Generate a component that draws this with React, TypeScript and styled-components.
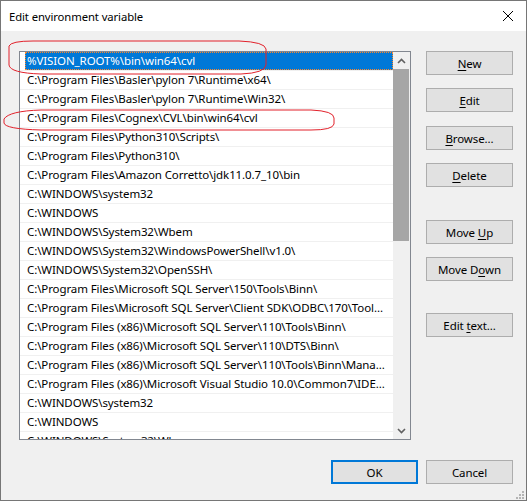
import React from "react";
import styled, { createGlobalStyle } from "styled-components";

const GlobalStyle = createGlobalStyle`
  html, body { margin: 0; padding: 0; background: #f0f0f0; }
  body { font-family: "Noto Sans", "Open Sans", "DejaVu Sans", sans-serif; font-size: 11.5px; letter-spacing: -0.1px; color: #000; }
  * { box-sizing: border-box; }
`;

const Window = styled.div`
  position: relative;
  width: 527px;
  height: 501px;
  border: 1px solid #767676;
  background: #f0f0f0;
  display: flex;
  flex-direction: column;
`;

const TitleBar = styled.div`
  height: 30px;
  background: #fff;
  display: flex;
  align-items: center;
  justify-content: space-between;
  padding: 0 13px 0 8px;
`;

const Title = styled.span`
  font-size: 11.3px;
  letter-spacing: -0.1px;
  color: #000;
`;

const Body = styled.div`
  flex: 1;
  display: flex;
  flex-direction: column;
  padding: 20px 13px 0 18px;
`;

const TopRow = styled.div`
  display: flex;
  gap: 15px;
`;

const ListBox = styled.div`
  width: 392px;
  height: 389px;
  border: 1px solid #828790;
  background: #fff;
  display: flex;
  overflow: hidden;
`;

const Rows = styled.div`
  flex: 1;
  display: flex;
  flex-direction: column;
  overflow: hidden;
`;

const Row = styled.div`
  height: 19px;
  flex: none;
  display: flex;
  padding-left: 5px;
  border-bottom: 1px solid #f0f0f0;
`;

const RowLabel = styled.div<{ $selected?: boolean }>`
  flex: 1;
  height: 18px;
  line-height: 18px;
  padding-left: 2px;
  white-space: nowrap;
  overflow: hidden;
  background: ${(p) => (p.$selected ? "#0078d7" : "transparent")};
  color: ${(p) => (p.$selected ? "#fff" : "#000")};
  outline: ${(p) => (p.$selected ? "1px dotted #ff8728" : "none")};
  outline-offset: -1px;
`;

const ScrollBar = styled.div`
  width: 17px;
  flex: none;
  background: #f0f0f0;
  display: flex;
  flex-direction: column;
`;

const ArrowBox = styled.div`
  height: 17px;
  flex: none;
  display: flex;
  align-items: center;
  justify-content: center;
`;

const Thumb = styled.div`
  height: 172px;
  margin-right: 1px;
  background: #a6a6a6;
`;

const Track = styled.div`
  flex: 1;
`;

const ButtonColumn = styled.div`
  display: flex;
  flex-direction: column;
  width: 87px;
`;

const Button = styled.button<{ $space?: number; $default?: boolean }>`
  width: 87px;
  height: 24px;
  margin: ${(p) => p.$space ?? 0}px 0 0 0;
  padding: 0;
  background: #e1e1e1;
  border: ${(p) => (p.$default ? "2px solid #0078d7" : "1px solid #adadad")};
  font-family: inherit;
  font-size: 11.5px;
  letter-spacing: -0.1px;
  color: #000;
  display: flex;
  align-items: center;
  justify-content: center;
  u { text-decoration-thickness: 1px; text-underline-offset: 2px; }
`;

const BottomRow = styled.div`
  display: flex;
  justify-content: flex-end;
  gap: 8px;
  margin-top: 20px;
`;

const Annotations = styled.svg`
  position: absolute;
  left: 0;
  top: 0;
  width: 527px;
  height: 501px;
  pointer-events: none;
`;

const Grip = styled.svg`
  position: absolute;
  right: 2px;
  bottom: 1px;
`;

const paths = [
  "%VISION_ROOT%\\bin\\win64\\cvl",
  "C:\\Program Files\\Basler\\pylon 7\\Runtime\\x64\\",
  "C:\\Program Files\\Basler\\pylon 7\\Runtime\\Win32\\",
  "C:\\Program Files\\Cognex\\CVL\\bin\\win64\\cvl",
  "C:\\Program Files\\Python310\\Scripts\\",
  "C:\\Program Files\\Python310\\",
  "C:\\Program Files\\Amazon Corretto\\jdk11.0.7_10\\bin",
  "C:\\WINDOWS\\system32",
  "C:\\WINDOWS",
  "C:\\WINDOWS\\System32\\Wbem",
  "C:\\WINDOWS\\System32\\WindowsPowerShell\\v1.0\\",
  "C:\\WINDOWS\\System32\\OpenSSH\\",
  "C:\\Program Files\\Microsoft SQL Server\\150\\Tools\\Binn\\",
  "C:\\Program Files\\Microsoft SQL Server\\Client SDK\\ODBC\\170\\Tool...",
  "C:\\Program Files (x86)\\Microsoft SQL Server\\110\\Tools\\Binn\\",
  "C:\\Program Files (x86)\\Microsoft SQL Server\\110\\DTS\\Binn\\",
  "C:\\Program Files (x86)\\Microsoft SQL Server\\110\\Tools\\Binn\\Mana...",
  "C:\\Program Files (x86)\\Microsoft Visual Studio 10.0\\Common7\\IDE...",
  "C:\\WINDOWS\\system32",
  "C:\\WINDOWS",
  "C:\\WINDOWS\\System32\\Wbem",
];

const Chevron = ({ up }: { up?: boolean }) => (
  <svg width="9" height="6" viewBox="0 0 9 6">
    <path
      d={up ? "M1 5 L4.5 1.5 L8 5" : "M1 1 L4.5 4.5 L8 1"}
      fill="none"
      stroke="#606060"
      strokeWidth="1.6"
    />
  </svg>
);

export default function App() {
  return (
    <>
      <GlobalStyle />
      <Window>
        <TitleBar>
          <Title>Edit environment variable</Title>
          <svg width="10" height="10" viewBox="0 0 10 10">
            <path d="M0 0 L10 10 M10 0 L0 10" stroke="#000" strokeWidth="1" />
          </svg>
        </TitleBar>
        <Body>
          <TopRow>
            <ListBox>
              <Rows>
                {paths.map((p, i) => (
                  <Row key={i}>
                    <RowLabel $selected={i === 0}>{p}</RowLabel>
                  </Row>
                ))}
              </Rows>
              <ScrollBar>
                <ArrowBox>
                  <Chevron up />
                </ArrowBox>
                <Thumb />
                <Track />
                <ArrowBox>
                  <Chevron />
                </ArrowBox>
              </ScrollBar>
            </ListBox>
            <ButtonColumn>
              <Button>
                <u>N</u>ew
              </Button>
              <Button $space={13}>
                <u>E</u>dit
              </Button>
              <Button $space={14}>
                <u>B</u>rowse...
              </Button>
              <Button $space={13}>
                <u>D</u>elete
              </Button>
              <Button $space={33}>
                Move&nbsp;<u>U</u>p
              </Button>
              <Button $space={13}>
                Move&nbsp;D<u>o</u>wn
              </Button>
              <Button $space={32}>
                Edit&nbsp;<u>t</u>ext...
              </Button>
            </ButtonColumn>
          </TopRow>
          <BottomRow>
            <Button $default>OK</Button>
            <Button>Cancel</Button>
          </BottomRow>
        </Body>
        <Annotations viewBox="0 0 527 501">
          <path
            d="M 8 45 Q 10 40 32 40 L 238 40 Q 264 41 265 48 L 265 64 Q 264 72 240 73 L 40 73 Q 9 72 8 64 Z"
            fill="none"
            stroke="#e2212b"
            strokeWidth="1"
          />
          <path
            d="M 3 118 Q 8 110 40 109 L 310 109 Q 333 110 333 117 L 333 123 Q 332 129 310 129 L 40 129 Q 4 128 3 122 Z"
            fill="none"
            stroke="#e2212b"
            strokeWidth="1"
          />
        </Annotations>
        <Grip width="9" height="9" viewBox="0 0 9 9">
          <rect x="7" y="1" width="2" height="2" fill="#b4b4b4" />
          <rect x="4" y="4" width="2" height="2" fill="#b4b4b4" />
          <rect x="7" y="4" width="2" height="2" fill="#b4b4b4" />
          <rect x="1" y="7" width="2" height="2" fill="#b4b4b4" />
          <rect x="4" y="7" width="2" height="2" fill="#b4b4b4" />
          <rect x="7" y="7" width="2" height="2" fill="#b4b4b4" />
        </Grip>
      </Window>
    </>
  );
}
